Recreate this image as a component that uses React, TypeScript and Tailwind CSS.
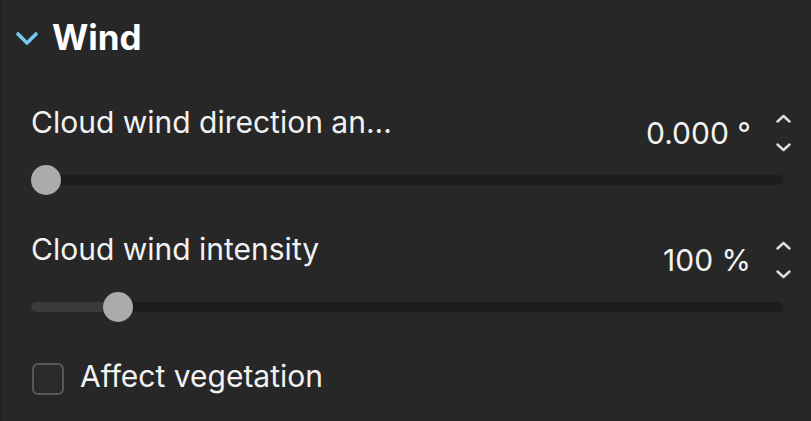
import { useState } from "react";

function Spinner() {
  return (
    <div className="flex h-[38px] w-[16px] flex-col items-center justify-between">
      <svg width="15" height="9" viewBox="0 0 15 9" fill="none">
        <path d="M1.5 7.5 L7.5 2 L13.5 7.5" stroke="#dedede" strokeWidth="2.4" strokeLinecap="round" strokeLinejoin="round" />
      </svg>
      <svg width="15" height="9" viewBox="0 0 15 9" fill="none">
        <path d="M1.5 1.5 L7.5 7 L13.5 1.5" stroke="#dedede" strokeWidth="2.4" strokeLinecap="round" strokeLinejoin="round" />
      </svg>
    </div>
  );
}

function SliderRow({ label, value, pct }: { label: string; value: string; pct: number }) {
  return (
    <div className="flex flex-col">
      <div className="flex h-[48px] items-start justify-between">
        <span className="text-[30px] leading-[36px] text-[#f2f2f2]">{label}</span>
        <div className="flex items-start">
          <span className="mt-[11px] text-[30px] leading-[36px] text-[#f2f2f2]">{value}</span>
          <div className="ml-[24px] mr-[20px] mt-[10px]">
            <Spinner />
          </div>
        </div>
      </div>
      <div className="relative mr-[28px] mt-[23px] h-[10px] rounded-full bg-[#1d1d1d]">
        <div className="h-full rounded-full bg-[#3b3b3b]" style={{ width: `${pct}%` }} />
        <div
          className="absolute top-1/2 h-[30px] w-[30px] -translate-x-1/2 -translate-y-1/2 rounded-full bg-[#ababab]"
          style={{ left: `calc(15px + (100% - 30px) * ${pct / 100})` }}
        />
      </div>
    </div>
  );
}

export default function App() {
  const [checked, setChecked] = useState(false);
  return (
    <div
      className="h-[421px] w-[811px] overflow-hidden border-l border-[#1f1f1f] bg-[#272727] text-white"
      style={{ fontFamily: "Inter, 'Noto Sans', sans-serif" }}
    >
      <div className="flex items-center pl-[14px] pt-[16px]">
        <svg width="24" height="16" viewBox="0 0 24 16" fill="none" className="mt-[3px]">
          <path d="M3 3 L12 12 L21 3" stroke="#74c8f0" strokeWidth="3.6" strokeLinecap="round" strokeLinejoin="round" />
        </svg>
        <span className="ml-[13px] text-[35px] font-bold leading-[42px]">Wind</span>
      </div>
      <div className="mt-[46px] flex flex-col gap-[46px] pl-[30px]">
        <SliderRow label="Cloud wind direction an..." value="0.000 °" pct={0} />
        <SliderRow label="Cloud wind intensity" value="100 %" pct={10} />
      </div>
      <label className="mt-[46px] flex items-start pl-[31px]">
        <button
          onClick={() => setChecked(!checked)}
          className="mt-[5px] h-[32px] w-[32px] rounded-[6px] border-2 border-[#585858] bg-[#2a2a2a]"
        />
        <span className="ml-[16px] text-[30px] leading-[36px] text-[#f2f2f2]">Affect vegetation</span>
      </label>
    </div>
  );
}
